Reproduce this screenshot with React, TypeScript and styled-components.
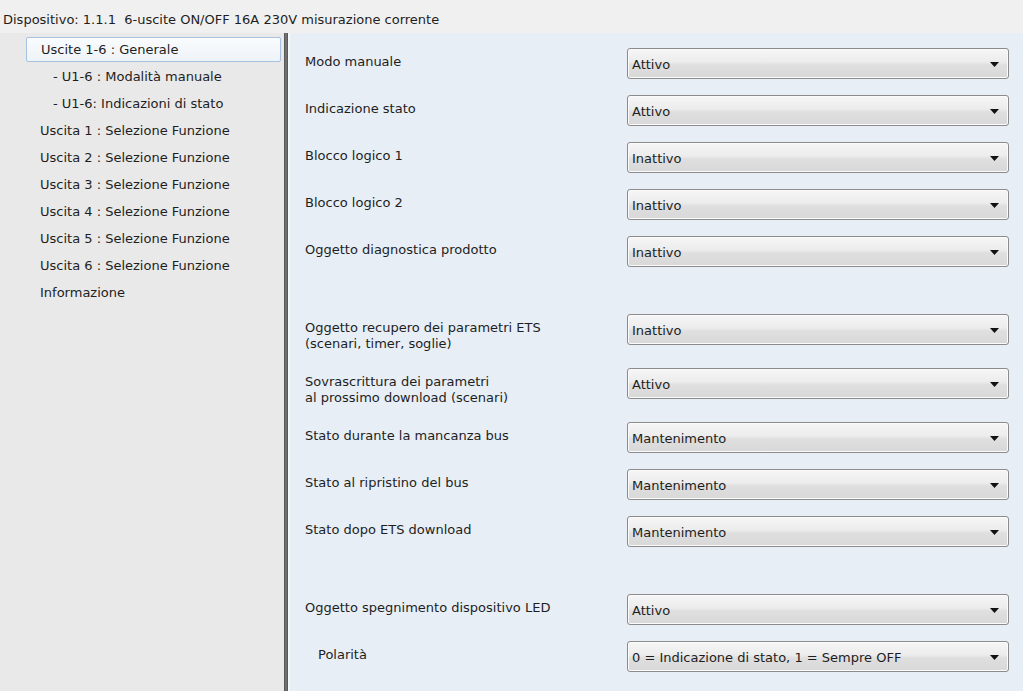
import React from "react";
import styled, { createGlobalStyle } from "styled-components";

const GlobalStyle = createGlobalStyle`
    html, body {
        margin: 0;
        padding: 0;
        background: #e9e9e9;
    }
    body {
        font-family: "DejaVu Sans", "Liberation Sans", sans-serif;
        font-size: 13px;
        color: #1e1e1e;
    }
`;

interface NavItem {
    label: string;
    level: number;
    selected?: boolean;
}

const navItems: NavItem[] = [
    { label: "Uscite 1-6 : Generale", level: 0, selected: true },
    { label: "- U1-6 : Modalità manuale", level: 1 },
    { label: "- U1-6: Indicazioni di stato", level: 1 },
    { label: "Uscita 1 : Selezione Funzione", level: 0 },
    { label: "Uscita 2 : Selezione Funzione", level: 0 },
    { label: "Uscita 3 : Selezione Funzione", level: 0 },
    { label: "Uscita 4 : Selezione Funzione", level: 0 },
    { label: "Uscita 5 : Selezione Funzione", level: 0 },
    { label: "Uscita 6 : Selezione Funzione", level: 0 },
    { label: "Informazione", level: 0 },
];

type Param = { label: string[]; value: string; indent?: boolean } | { spacer: true };

const params: Param[] = [
    { label: ["Modo manuale"], value: "Attivo" },
    { label: ["Indicazione stato"], value: "Attivo" },
    { label: ["Blocco logico 1"], value: "Inattivo" },
    { label: ["Blocco logico 2"], value: "Inattivo" },
    { label: ["Oggetto diagnostica prodotto"], value: "Inattivo" },
    { spacer: true },
    { label: ["Oggetto recupero dei parametri ETS", "(scenari, timer, soglie)"], value: "Inattivo" },
    { label: ["Sovrascrittura dei parametri", "al prossimo download (scenari)"], value: "Attivo" },
    { label: ["Stato durante la mancanza bus"], value: "Mantenimento" },
    { label: ["Stato al ripristino del bus"], value: "Mantenimento" },
    { label: ["Stato dopo ETS download"], value: "Mantenimento" },
    { spacer: true },
    { label: ["Oggetto spegnimento dispositivo LED"], value: "Attivo" },
    { label: ["Polarità"], value: "0 = Indicazione di stato, 1 = Sempre OFF", indent: true },
];

const Arrow = () => (
    <svg width="9" height="5" viewBox="0 0 9 5">
        <path d="M0 0 H9 L4.5 5 Z" fill="#111" />
    </svg>
);

export default function App() {
    return (
        <Window>
            <GlobalStyle />
            <Header>Dispositivo: 1.1.1&nbsp;&nbsp;6-uscite ON/OFF 16A 230V misurazione corrente</Header>
            <Main>
                <Sidebar>
                    {navItems.map((item) => (
                        <NavRow key={item.label} $level={item.level} $selected={!!item.selected}>
                            {item.label}
                        </NavRow>
                    ))}
                </Sidebar>
                <Divider />
                <Content>
                    {params.map((p, i) =>
                        "spacer" in p ? (
                            <Spacer key={i} />
                        ) : (
                            <ParamRow key={i}>
                                <Label $indent={!!p.indent}>
                                    {p.label.map((line) => (
                                        <div key={line}>{line}</div>
                                    ))}
                                </Label>
                                <Select>
                                    <span>{p.value}</span>
                                    <Arrow />
                                </Select>
                            </ParamRow>
                        )
                    )}
                </Content>
            </Main>
        </Window>
    );
}

const Window = styled.div`
    display: flex;
    flex-direction: column;
    width: 1023px;
    height: 691px;
    overflow: hidden;
`;

const Header = styled.div`
    height: 33px;
    flex: none;
    display: flex;
    align-items: center;
    padding: 5px 0 0 3px;
    box-sizing: border-box;
    background: #f0f0f0;
    white-space: nowrap;
`;

const Main = styled.div`
    flex: 1;
    display: flex;
    min-height: 0;
`;

const Sidebar = styled.nav`
    width: 284px;
    flex: none;
    display: flex;
    flex-direction: column;
    gap: 2px;
    padding-top: 4px;
    background: #e9e9e9;
    box-sizing: border-box;
`;

const NavRow = styled.div<{ $level: number; $selected: boolean }>`
    height: 25px;
    flex: none;
    margin: 0 3px 0 ${(p) => (p.$selected ? 26 : 0)}px;
    padding-left: ${(p) => (p.$selected ? 14 : 39 + p.$level * 13)}px;
    display: flex;
    align-items: center;
    box-sizing: border-box;
    white-space: nowrap;
    border-radius: 2px;
    border: 1px solid ${(p) => (p.$selected ? "#a6c2df" : "transparent")};
    background: ${(p) => (p.$selected ? "linear-gradient(#fafcfe, #eef3f8)" : "transparent")};
`;

const Divider = styled.div`
    width: 4px;
    flex: none;
    background: linear-gradient(to right, #4e4e4e, #7c7c7c 50%, #4e4e4e);
    border-right: 2px solid #f5f8fb;
`;

const Content = styled.div`
    flex: 1;
    background: #e7eef6;
    padding: 15px 14px 0 15px;
    display: flex;
    flex-direction: column;
    gap: 16px;
    overflow: hidden;
`;

const ParamRow = styled.div`
    flex: none;
    display: grid;
    grid-template-columns: 322px 382px;
    align-items: start;
`;

const Spacer = styled.div`
    flex: none;
    height: 15px;
`;

const Label = styled.div<{ $indent: boolean }>`
    padding-top: 6px;
    padding-left: ${(p) => (p.$indent ? 13 : 0)}px;
    line-height: 16px;
    white-space: nowrap;
`;

const Select = styled.div`
    height: 31px;
    box-sizing: border-box;
    display: flex;
    align-items: center;
    justify-content: space-between;
    padding: 2px 9px 0 4px;
    border: 1px solid #8b8b8b;
    border-radius: 3px;
    background: linear-gradient(#f6f6f6, #ececec 45%, #dfdfdf 55%, #d8d8d8);
    box-shadow: inset 0 0 0 1px #fbfbfb;
    white-space: nowrap;
`;
